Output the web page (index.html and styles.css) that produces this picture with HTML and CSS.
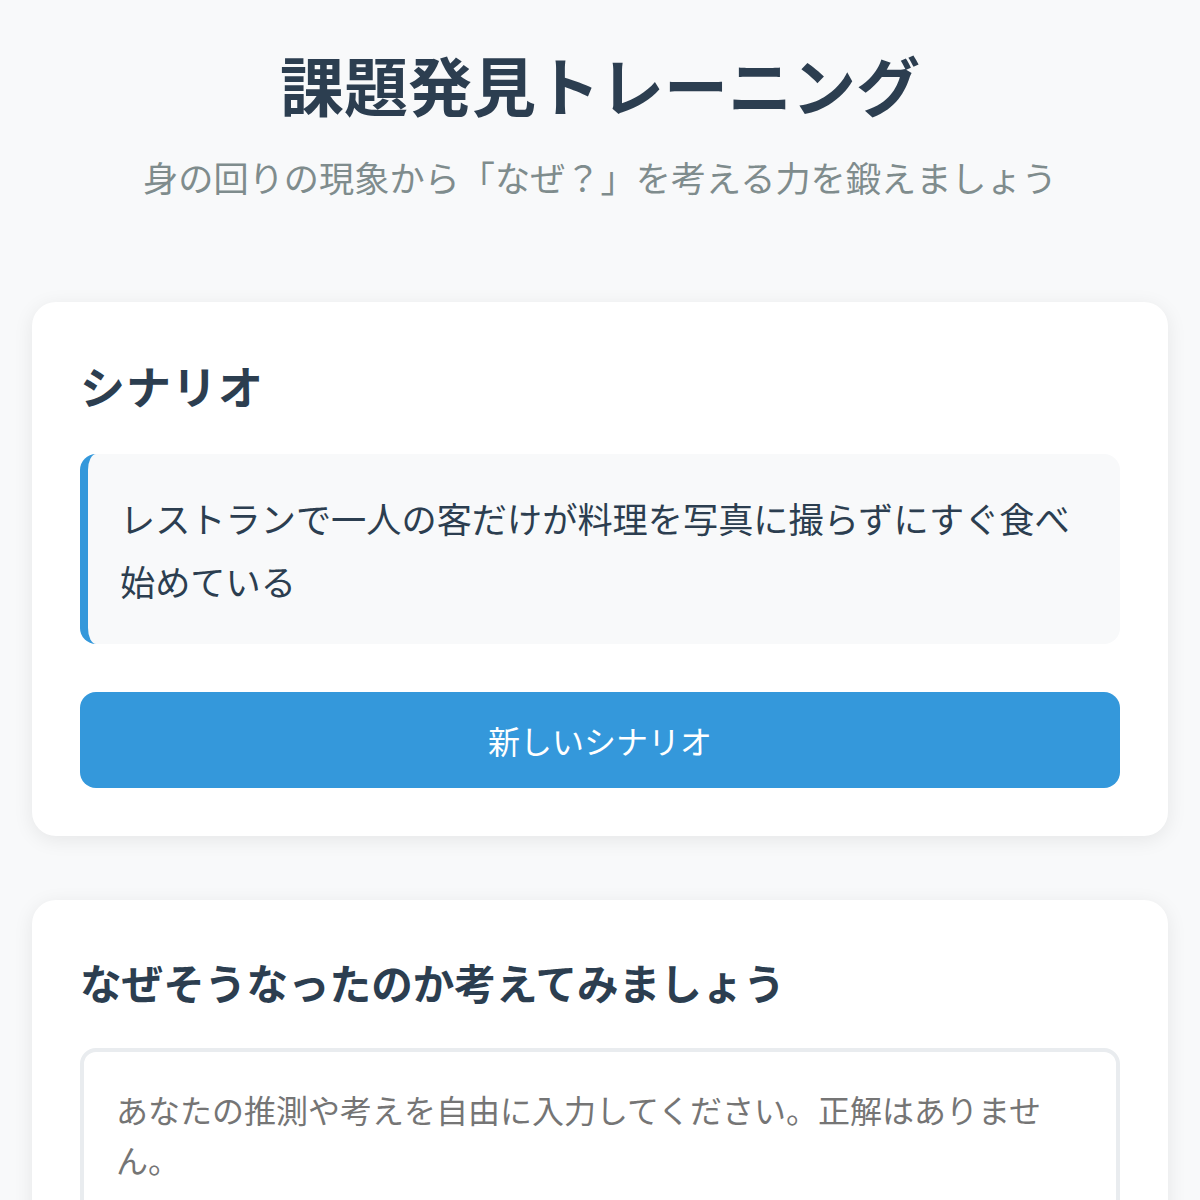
FILE: index.html
```html
<!DOCTYPE html>
<html lang="ja">
<head>
<meta charset="utf-8">
<title>課題発見トレーニング</title>
<link rel="stylesheet" href="styles.css">
</head>
<body>
<div class="container">
  <header class="header">
    <h1 class="title">課題発見トレーニング</h1>
    <p class="subtitle">身の回りの現象から「なぜ？」を考える力を鍛えましょう</p>
  </header>

  <section class="card">
    <h2 class="card-title card-title-lg">シナリオ</h2>
    <div class="scenario">レストランで一人の客だけが料理を写真に撮らずにすぐ食べ始めている</div>
    <button class="btn" type="button">新しいシナリオ</button>
  </section>

  <section class="card">
    <h3 class="card-title">なぜそうなったのか考えてみましょう</h3>
    <textarea class="answer" placeholder="あなたの推測や考えを自由に入力してください。正解はありません。"></textarea>
  </section>
</div>
</body>
</html>
```

FILE: styles.css
```css
* { box-sizing: border-box; }

html, body {
  margin: 0;
  padding: 0;
  background: #f8f9fa;
}

body {
  font-family: "Noto Sans CJK JP", "Noto Sans", sans-serif;
  color: #2c3e50;
}

.container {
  padding: 43px 32px 40px;
  display: flex;
  flex-direction: column;
  gap: 64px;
}

.header {
  text-align: center;
  margin-bottom: 33px;
}

.title {
  margin: 0;
  font-size: 64px;
  line-height: 80px;
  font-weight: 700;
  color: #2c3e50;
}

.subtitle {
  margin: 26px 0 0;
  font-size: 35.2px;
  line-height: 56px;
  color: #7f8c8d;
}

.card {
  background: #ffffff;
  border-radius: 24px;
  padding: 48px;
  box-shadow: 0 4px 20px rgba(0, 0, 0, 0.08);
  display: flex;
  flex-direction: column;
}

.card-title {
  margin: 0 0 32px;
  font-size: 41.6px;
  line-height: 68px;
  font-weight: 700;
  color: #2c3e50;
}

.card-title-lg {
  font-size: 45px;
  line-height: 72px;
  letter-spacing: 1px;
}

.scenario {
  background: #f8f9fa;
  border-left: 8px solid #3498db;
  border-radius: 16px;
  padding: 32px 40px 32px 32px;
  font-size: 35.2px;
  line-height: 63px;
  color: #2c3e50;
}

.btn {
  margin-top: 48px;
  height: 96px;
  border: none;
  border-radius: 16px;
  background: #3498db;
  color: #ffffff;
  font-family: inherit;
  font-size: 32px;
  cursor: pointer;
}

.answer {
  width: 100%;
  height: 300px;
  border: 4px solid #e9ecef;
  border-radius: 16px;
  padding: 32px 60px 32px 32px;
  font-family: inherit;
  font-size: 32px;
  line-height: 50px;
  color: #2c3e50;
  resize: vertical;
  background: #ffffff;
}

.answer::placeholder {
  color: #757575;
}
```
